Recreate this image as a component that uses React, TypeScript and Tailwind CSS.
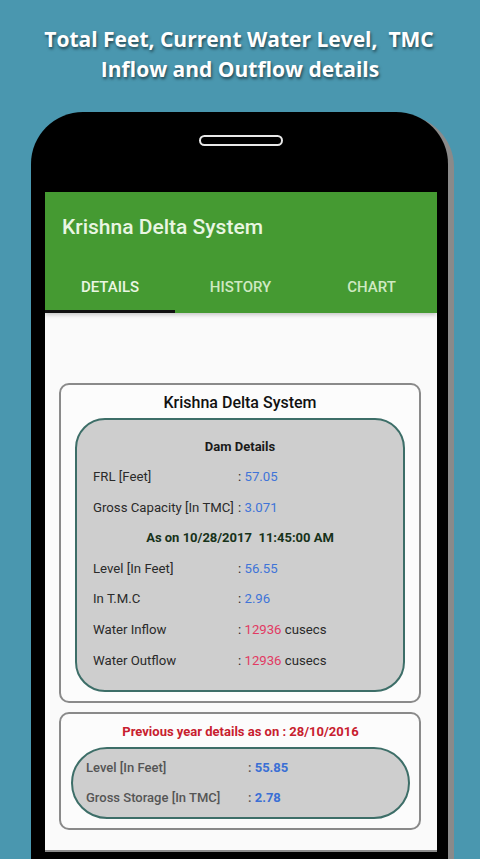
import React from "react";

const Row = ({ label, value, color, suffix }: { label: string; value: string; color: string; suffix?: string }) => (
  <div className="flex items-center h-[30.6px] text-[13.2px] text-[#2a2a2a]">
    <div className="w-[145px] shrink-0">{label}</div>
    <div>
      <span>: </span>
      <span className={color}>{value}</span>
      {suffix ? <span> {suffix}</span> : null}
    </div>
  </div>
);

export default function App() {
  return (
    <div
      className="w-[480px] h-[859px] bg-[#4a97af] overflow-hidden flex flex-col"
      style={{ fontFamily: "Roboto, 'Noto Sans', sans-serif" }}
    >
      <div
        className="h-[112px] shrink-0 pt-[24px] text-center text-white font-bold text-[21px] leading-[30px] [text-shadow:1px_2px_3px_rgba(0,0,0,0.55)]"
        style={{ fontFamily: "'Open Sans', 'Noto Sans', sans-serif" }}
      >
        <div className="whitespace-pre pr-[2px]">Total Feet, Current Water Level,  TMC</div>
        <div>Inflow and Outflow details</div>
      </div>

      <div className="ml-[31px] w-[417px] flex-1 bg-black rounded-t-[52px] shadow-[6px_3px_0_0_#8a8a8a] flex flex-col pl-[14px] pr-[11px]">
        <div className="h-[80px] shrink-0 flex justify-center pt-[23px]">
          <div className="w-[84px] h-[11px] rounded-full border-2 border-[#e8e8e8] bg-black" />
        </div>

        <div className="flex-1 bg-[#fafafa] flex flex-col border-b-2 border-[#8c8c8c] mb-[7px]">
          {/* App bar */}
          <div className="bg-[#459a32] shrink-0 shadow-[0_2px_4px_rgba(0,0,0,0.2)] relative z-10">
            <div className="h-[72px] flex items-center pl-[17px] text-[21px] font-medium text-[#e9f6e2]">
              Krishna Delta System
            </div>
            <div className="flex h-[49px]">
              <div className="w-[130px] flex flex-col">
                <div className="flex-1 flex items-center justify-center text-[15px] font-medium text-[#eaf6e3]">DETAILS</div>
                <div className="h-[3px] bg-[#111]" />
              </div>
              <div className="w-[131px] flex items-center justify-center text-[15px] font-medium text-[#cfe9c2] pb-[3px]">HISTORY</div>
              <div className="w-[131px] flex items-center justify-center text-[15px] font-medium text-[#cfe9c2] pb-[3px]">CHART</div>
            </div>
          </div>

          {/* Content */}
          <div className="pt-[70px] pl-[14px] pr-[16px] flex flex-col gap-[9px]">
            <div className="border-2 border-[#8a8a8a] rounded-[10px] bg-[#fcfcfc] px-[14px] pb-[9px]">
              <div className="h-[33px] flex items-center justify-center text-[16px] font-medium text-[#111] pt-[3px]">
                Krishna Delta System
              </div>
              <div className="bg-[#cecece] border-2 border-[#3d6e68] rounded-[30px] pt-[11px] pb-[14px] px-[16px]">
                <div className="h-[30.6px] flex items-center justify-center text-[13px] font-bold text-[#1a1a1a]">
                  Dam Details
                </div>
                <Row label="FRL [Feet]" value="57.05" color="text-[#3f74d8]" />
                <Row label="Gross Capacity [In TMC]" value="3.071" color="text-[#3f74d8]" />
                <div className="h-[30.6px] flex items-center justify-center text-[13px] font-bold text-[#17321a] whitespace-pre">
                  As on 10/28/2017  11:45:00 AM
                </div>
                <Row label="Level [In Feet]" value="56.55" color="text-[#3f74d8]" />
                <Row label="In T.M.C" value="2.96" color="text-[#3f74d8]" />
                <Row label="Water Inflow" value="12936" color="text-[#e23a63]" suffix="cusecs" />
                <Row label="Water Outflow" value="12936" color="text-[#e23a63]" suffix="cusecs" />
              </div>
            </div>

            <div className="border-2 border-[#8a8a8a] rounded-[10px] bg-[#fcfcfc] pl-[10px] pr-[9px] pb-[9px]">
              <div className="h-[33px] flex items-center justify-center text-[13px] font-bold text-[#c8202e] pt-[2px]">
                Previous year details as on : 28/10/2016
              </div>
              <div className="bg-[#cecece] border-2 border-[#3d6e68] rounded-[36px] pl-[13px] pt-[4px] pb-[4px]">
                <div className="flex items-center h-[30px] text-[13px] font-medium text-[#555]">
                  <div className="w-[162px] shrink-0">Level [In Feet]</div>
                  <div>: <span className="font-bold text-[#3a6fd5]">55.85</span></div>
                </div>
                <div className="flex items-center h-[30px] text-[13px] font-medium text-[#555]">
                  <div className="w-[162px] shrink-0">Gross Storage [In TMC]</div>
                  <div>: <span className="font-bold text-[#3a6fd5]">2.78</span></div>
                </div>
              </div>
            </div>
          </div>
          <div className="flex-1" />
        </div>
      </div>
    </div>
  );
}
